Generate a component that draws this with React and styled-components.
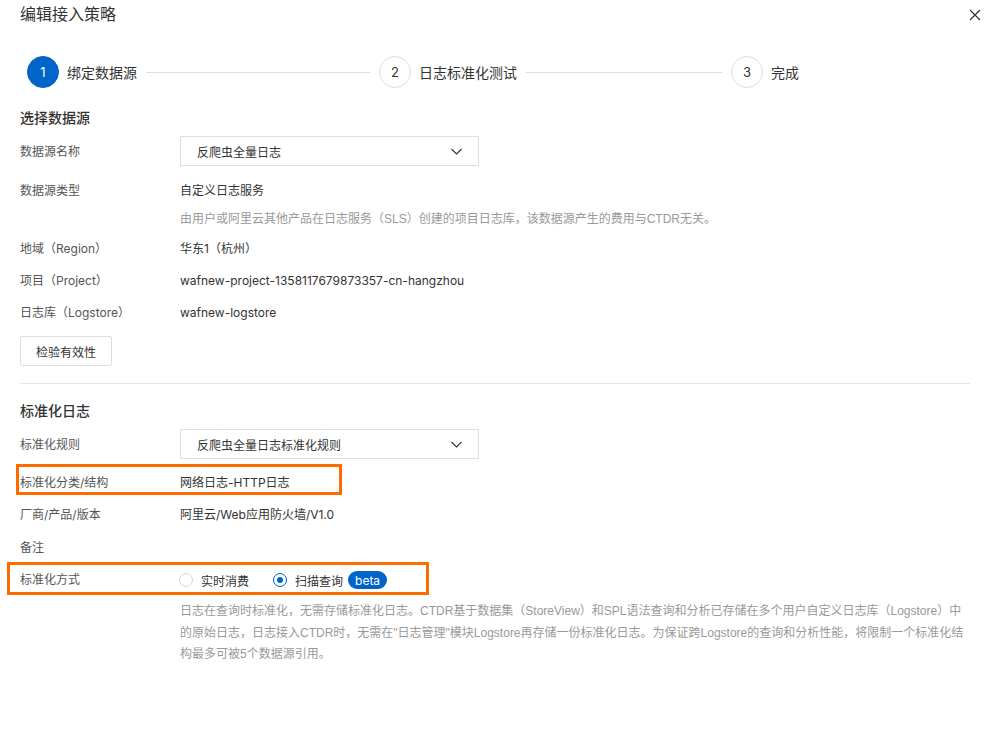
import React from "react";
import styled, { createGlobalStyle } from "styled-components";

const GlobalStyle = createGlobalStyle`
  html, body {
    margin: 0;
    padding: 0;
    background: #fff;
  }
  body {
    font-family: Inter, "Noto Sans CJK SC", sans-serif;
    color: #333;
    -webkit-font-smoothing: antialiased;
  }
`;

const Page = styled.div`
  width: 991px;
  height: 739px;
  box-sizing: border-box;
  padding: 0 21px 0 20px;
  background: #fff;
  overflow: hidden;
`;

const Header = styled.div`
  display: flex;
  align-items: center;
  justify-content: space-between;
  height: 28px;
`;

const Title = styled.div`
  font-size: 16px;
  line-height: 28px;
  color: #333;
`;

const CloseButton = styled.div`
  display: flex;
  align-items: center;
  justify-content: center;
  width: 16px;
  height: 16px;
  margin-right: -13px;
  margin-top: 2px;
`;

const Steps = styled.div`
  display: flex;
  align-items: center;
  margin: 28px 0 0 7px;
  height: 32px;
`;

const StepItem = styled.div`
  display: flex;
  align-items: center;
  flex: ${(p) => (p.$last ? "0 0 auto" : "0 0 352px")};
`;

const StepCircle = styled.div`
  width: 32px;
  height: 32px;
  box-sizing: border-box;
  border-radius: 50%;
  display: flex;
  align-items: center;
  justify-content: center;
  font-size: 13px;
  background: ${(p) => (p.$active ? "#0064c8" : "#fff")};
  color: ${(p) => (p.$active ? "#fff" : "#333")};
  border: 1px solid ${(p) => (p.$active ? "#0064c8" : "#dedede")};
  flex-shrink: 0;
`;

const StepLabel = styled.span`
  margin-left: 8px;
  font-size: 14px;
  color: #333;
  white-space: nowrap;
`;

const StepLine = styled.div`
  flex: 1;
  height: 1px;
  background: #dedede;
  margin: 0 9px;
`;

const SectionTitle = styled.div`
  font-size: 14px;
  font-weight: 500;
  line-height: 20px;
  color: #333;
  margin-top: ${(p) => p.$top}px;
  margin-bottom: 8px;
`;

const Row = styled.div`
  position: relative;
  display: grid;
  grid-template-columns: 160px 1fr;
  align-items: start;
  margin-top: ${(p) => p.$top || 0}px;
  margin-bottom: ${(p) => p.$bottom || 0}px;
`;

const Label = styled.div`
  font-size: 12px;
  line-height: ${(p) => p.$lh || 32}px;
  color: #555;
  white-space: nowrap;
`;

const Value = styled.div`
  font-size: 12px;
  line-height: 32px;
  min-height: 32px;
  color: #333;
  white-space: nowrap;
`;

const Hint = styled.div`
  font-family: "Liberation Sans", "Noto Sans CJK SC", sans-serif;
  font-size: 12px;
  line-height: ${(p) => p.$lh || 24}px;
  color: #999;
  margin-top: ${(p) => p.$top || 0}px;
`;

const Select = styled.div`
  width: 299px;
  height: 30px;
  box-sizing: border-box;
  border: 1px solid #dedede;
  display: flex;
  align-items: center;
  justify-content: space-between;
  padding: 0 16px;
  font-size: 12px;
  color: #333;
`;

const Button = styled.div`
  display: inline-flex;
  align-items: center;
  justify-content: center;
  width: 92px;
  height: 30px;
  box-sizing: border-box;
  border: 1px solid #dedede;
  border-radius: 2px;
  font-size: 12px;
  color: #333;
  margin-top: 7px;
`;

const Divider = styled.div`
  height: 1px;
  background: #e5e5e5;
  margin-top: 17px;
`;

const Highlight = styled.div`
  position: absolute;
  left: ${(p) => p.$left}px;
  top: ${(p) => p.$top}px;
  width: ${(p) => p.$width}px;
  height: ${(p) => p.$height}px;
  box-sizing: border-box;
  border: 3px solid #ff6a00;
  pointer-events: none;
`;

const RadioGroup = styled.div`
  display: flex;
  align-items: center;
  height: 32px;
`;

const RadioOption = styled.label`
  display: flex;
  align-items: center;
  font-size: 12px;
  color: #333;
  margin-right: 25px;
  margin-left: -1px;
`;

const RadioDot = styled.span`
  width: 14px;
  height: 14px;
  box-sizing: border-box;
  border-radius: 50%;
  border: 1px solid ${(p) => (p.$checked ? "#0064c8" : "#d8d8d8")};
  display: flex;
  align-items: center;
  justify-content: center;
  margin-right: 8px;

  &::after {
    content: "";
    display: ${(p) => (p.$checked ? "block" : "none")};
    width: 6px;
    height: 6px;
    border-radius: 50%;
    background: #0064c8;
  }
`;

const Badge = styled.span`
  display: inline-flex;
  align-items: center;
  height: 18px;
  padding: 0 7px;
  margin-left: 5px;
  border-radius: 9px;
  background: #0064c8;
  color: #fff;
  font-size: 12px;
`;

const Chevron = () => (
  <svg width="11" height="11" viewBox="0 0 11 11" fill="none">
    <polyline points="0.5,3 5.5,8 10.5,3" stroke="#333" strokeWidth="1.1" />
  </svg>
);

const CloseIcon = () => (
  <svg width="12" height="12" viewBox="0 0 12 12">
    <path d="M1 1 L11 11 M11 1 L1 11" stroke="#333" strokeWidth="1.2" />
  </svg>
);

const steps = [
  { n: 1, label: "绑定数据源" },
  { n: 2, label: "日志标准化测试" },
  { n: 3, label: "完成" },
];

const App = () => (
  <>
    <GlobalStyle />
    <Page>
      <Header>
        <Title>编辑接入策略</Title>
        <CloseButton>
          <CloseIcon />
        </CloseButton>
      </Header>

      <Steps>
        {steps.map((s, i) => (
          <StepItem key={s.n} $last={i === steps.length - 1}>
            <StepCircle $active={i === 0}>{s.n}</StepCircle>
            <StepLabel>{s.label}</StepLabel>
            {i < steps.length - 1 && <StepLine />}
          </StepItem>
        ))}
      </Steps>

      <SectionTitle $top={20}>选择数据源</SectionTitle>
      <Row $bottom={8}>
        <Label $lh={31}>数据源名称</Label>
        <Select>
          <span>反爬虫全量日志</span>
          <Chevron />
        </Select>
      </Row>
      <Row>
        <Label>数据源类型</Label>
        <div>
          <Value>自定义日志服务</Value>
          <Hint>
            由用户或阿里云其他产品在日志服务（SLS）创建的项目日志库，该数据源产生的费用与CTDR无关。
          </Hint>
        </div>
      </Row>
      <Row $top={2}>
        <Label>地域（Region）</Label>
        <Value>华东1（杭州）</Value>
      </Row>
      <Row>
        <Label>项目（Project）</Label>
        <Value>wafnew-project-1358117679873357-cn-hangzhou</Value>
      </Row>
      <Row>
        <Label>日志库（Logstore）</Label>
        <Value>wafnew-logstore</Value>
      </Row>
      <Button>检验有效性</Button>

      <Divider />

      <SectionTitle $top={17}>标准化日志</SectionTitle>
      <Row $top={4} $bottom={7}>
        <Label $lh={31}>标准化规则</Label>
        <Select>
          <span>反爬虫全量日志标准化规则</span>
          <Chevron />
        </Select>
      </Row>
      <Row>
        <Label>标准化分类/结构</Label>
        <Value>网络日志-HTTP日志</Value>
        <Highlight $left={-4} $top={-3} $width={326} $height={31} />
      </Row>
      <Row>
        <Label>厂商/产品/版本</Label>
        <Value>阿里云/Web应用防火墙/V1.0</Value>
      </Row>
      <Row $top={1}>
        <Label>备注</Label>
        <Value />
      </Row>
      <Row>
        <Label>标准化方式</Label>
        <div>
          <RadioGroup>
            <RadioOption>
              <RadioDot />
              实时消费
            </RadioOption>
            <RadioOption>
              <RadioDot $checked />
              扫描查询
              <Badge>beta</Badge>
            </RadioOption>
          </RadioGroup>
          <Hint $lh={21.5} $top={5}>
            日志在查询时标准化，无需存储标准化日志。CTDR基于数据集（StoreView）和SPL语法查询和分析已存储在多个用户自定义日志库（Logstore）中的原始日志，日志接入CTDR时，无需在"日志管理"模块Logstore再存储一份标准化日志。为保证跨Logstore的查询和分析性能，将限制一个标准化结构最多可被5个数据源引用。
          </Hint>
        </div>
        <Highlight $left={-13} $top={-2} $width={422} $height={33} />
      </Row>
    </Page>
  </>
);

export default App;
